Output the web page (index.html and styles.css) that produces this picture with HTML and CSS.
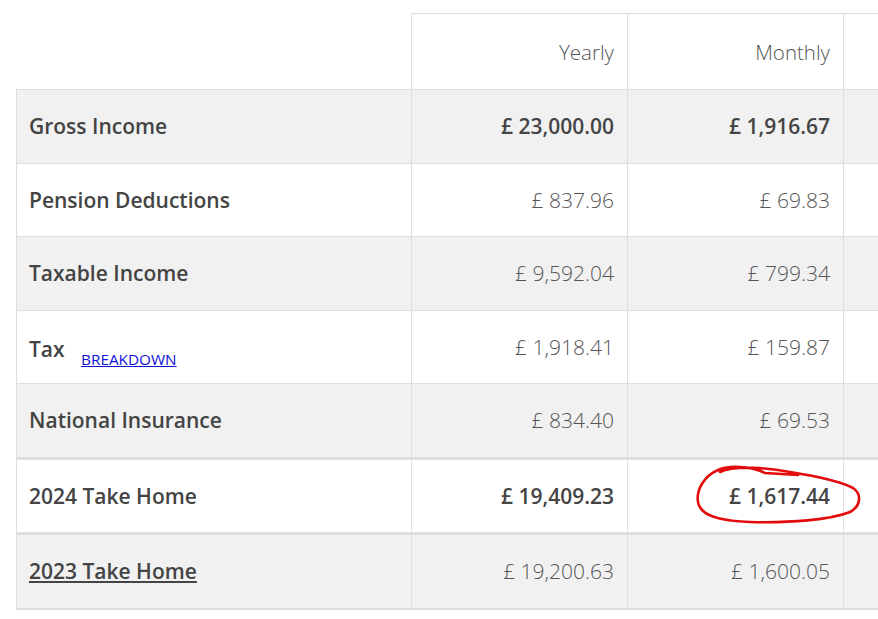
FILE: index.html
```html
<!DOCTYPE html>
<html lang="en">
<head>
<meta charset="utf-8">
<title>Take Home Pay</title>
<link rel="stylesheet" href="styles.css">
</head>
<body>
<div class="page">
  <table class="tax-table">
    <colgroup>
      <col class="c-label"><col class="c-num"><col class="c-num"><col class="c-num">
    </colgroup>
    <thead>
      <tr>
        <th class="blank"></th>
        <th>Yearly</th>
        <th>Monthly</th>
        <th>Weekly</th>
      </tr>
    </thead>
    <tbody>
      <tr class="shade strong">
        <td class="label">Gross Income</td>
        <td class="num">£ 23,000.00</td>
        <td class="num">£ 1,916.67</td>
        <td class="num">£ 442.31</td>
      </tr>
      <tr>
        <td class="label">Pension Deductions</td>
        <td class="num">£ 837.96</td>
        <td class="num">£ 69.83</td>
        <td class="num">£ 16.11</td>
      </tr>
      <tr class="shade">
        <td class="label">Taxable Income</td>
        <td class="num">£ 9,592.04</td>
        <td class="num">£ 799.34</td>
        <td class="num">£ 184.46</td>
      </tr>
      <tr>
        <td class="label tax-cell">Tax <a class="breakdown" href="#">BREAKDOWN</a></td>
        <td class="num">£ 1,918.41</td>
        <td class="num">£ 159.87</td>
        <td class="num">£ 36.89</td>
      </tr>
      <tr class="shade">
        <td class="label">National Insurance</td>
        <td class="num">£ 834.40</td>
        <td class="num">£ 69.53</td>
        <td class="num">£ 16.05</td>
      </tr>
      <tr class="total strong">
        <td class="label">2024 Take Home</td>
        <td class="num">£ 19,409.23</td>
        <td class="num">£ 1,617.44</td>
        <td class="num">£ 373.25</td>
      </tr>
      <tr class="shade total last">
        <td class="label"><a class="prev" href="#">2023 Take Home</a></td>
        <td class="num">£ 19,200.63</td>
        <td class="num">£ 1,600.05</td>
        <td class="num">£ 369.24</td>
      </tr>
    </tbody>
  </table>
</div>
<svg class="scribble" width="175" height="70" viewBox="0 0 175 70" aria-hidden="true">
  <path d="M30 12 C45 5 80 8 100 12 C125 16 150 21 163 28 C172 34 171 46 160 52 C140 60 100 63 60 62 C30 61 10 56 8 42 C6 30 14 16 28 10 C40 5 60 6 75 13 L108 15" fill="none" stroke="#e30b0b" stroke-width="2.6" stroke-linecap="round" stroke-linejoin="round"/>
</svg>
</body>
</html>
```
FILE: styles.css
```css
html, body {
  margin: 0;
  padding: 0;
  background: #ffffff;
  overflow: hidden;
}

body {
  position: relative;
  width: 878px;
  height: 619px;
  font-family: "Open Sans", "Noto Sans", sans-serif;
  color: #444444;
}

.page {
  padding: 13px 0 0 16px;
}

.tax-table {
  border-collapse: collapse;
  table-layout: fixed;
  width: 1043px;
}

.c-label { width: 395px; }
.c-num { width: 216px; }

.tax-table th,
.tax-table td {
  border: 1px solid #dedede;
  padding: 0 13px 0 12px;
  font-size: 21px;
  line-height: 28px;
  vertical-align: middle;
}

.tax-table th {
  height: 75px;
  font-size: 20.5px;
  font-weight: 300;
  text-align: right;
  color: #555555;
}

.tax-table th.blank {
  border-top: none;
  border-left: none;
}

.tax-table td {
  height: 72.5px;
}

.tax-table td.tax-cell {
  height: 67.5px;
  padding-top: 5px;
}

.shade td {
  background: #f1f1f1;
}

.label {
  font-weight: 600;
  color: #444444;
  text-align: left;
}

.num {
  text-align: right;
  font-weight: 300;
  color: #555555;
}

.strong .num {
  font-weight: 600;
  color: #444444;
}

.total td {
  border-top: 3px solid #dedede;
}

.last td {
  border-bottom: 2px solid #dedede;
}

.breakdown {
  margin-left: 11px;
  font-size: 15.3px;
  font-weight: 400;
  line-height: 0;
  vertical-align: -7.5px;
  color: #1010d8;
  text-decoration: underline;
}

.prev {
  color: #444444;
  text-decoration: underline;
}

.scribble {
  position: absolute;
  left: 690px;
  top: 460px;
  pointer-events: none;
}
```
